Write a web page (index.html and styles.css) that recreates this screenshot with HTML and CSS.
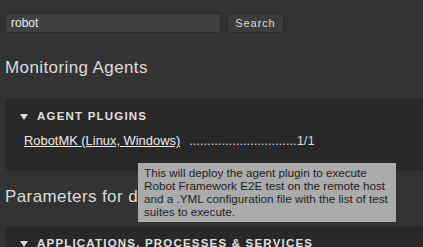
FILE: index.html
```html
<!DOCTYPE html>
<html lang="en">
<head>
  <meta charset="UTF-8" />
  <title>Monitoring Agents</title>
  <link rel="stylesheet" href="styles.css">
</head>
<body>
  <div class="page">
    <form class="search">
      <input class="search-input" type="text" value="robot" />
      <button class="search-button" type="button">Search</button>
    </form>

    <h1 class="title">Monitoring Agents</h1>

    <div class="box">
      <div class="box-head">
        <span class="caret"></span>
        <span class="box-title">AGENT PLUGINS</span>
      </div>
      <div class="row">
        <a class="row-link" href="#">RobotMK (Linux, Windows)</a>
        <span class="row-dots">..............................1/1</span>
      </div>
    </div>

    <h1 class="title title-params">Parameters for deployed agents</h1>

    <div class="box box-next">
      <div class="box-head">
        <span class="caret"></span>
        <span class="box-title">APPLICATIONS, PROCESSES &amp; SERVICES</span>
      </div>
    </div>

    <!-- tooltip over the link -->
    <div class="tooltip">This will deploy the agent plugin to execute<br>Robot Framework E2E test on the remote host<br>and a .YML configuration file with the list of test<br>suites to execute.</div>
  </div>
</body>
</html>
```

FILE: styles.css
```css
html {
  overflow: hidden;
}

body {
  margin: 0;
  background-color: #333333;
  color: #dcdcdc;
  font-family: 'Liberation Sans', Arial, sans-serif;
}

.page {
  position: relative;
  width: 440px;
  height: 247px;
  overflow: hidden;
  padding: 13px 0 0 5px;
}

.search {
  display: flex;
  gap: 6px;
  margin: 0;
}

.search-input {
  box-sizing: border-box;
  width: 216px;
  height: 20px;
  padding: 0 5px;
  background: #404040;
  border: 1px solid #2a2a2a;
  border-radius: 3px;
  color: #ededed;
  font-family: inherit;
  font-size: 12px;
  outline: none;
}

.search-button {
  box-sizing: border-box;
  width: 57px;
  height: 20px;
  padding: 0;
  background: #3c3c3c;
  border: 1px solid #2a2a2a;
  border-radius: 4px;
  color: #dcdcdc;
  font-family: inherit;
  font-size: 11px;
  letter-spacing: 0.9px;
}

.title {
  margin: 25px 0 0;
  font-size: 17px;
  font-weight: normal;
  letter-spacing: 0.4px;
  line-height: 20px;
}

.title-params {
  margin-top: 16px;
  white-space: nowrap;
}

.box {
  margin-top: 21px;
  background: #282828;
  border-top: 1px solid #2c2c2c;
  border-left: 1px solid #2c2c2c;
  border-radius: 5px 0 0 5px;
  padding: 8px 0 23px 14px;
}

.box-next {
  margin-top: 19px;
}

.box-head {
  display: flex;
  align-items: center;
  gap: 9px;
  height: 15px;
}

.caret {
  width: 0;
  height: 0;
  margin-top: 3px;
  border-left: 4px solid transparent;
  border-right: 4px solid transparent;
  border-top: 6px solid #d8d8d8;
}

.box-title {
  font-size: 11.5px;
  font-weight: bold;
  letter-spacing: 1.2px;
  color: #e0e0e0;
  white-space: nowrap;
}

.row {
  display: flex;
  gap: 9px;
  margin: 11px 0 0 4px;
  font-size: 12.9px;
  line-height: 14px;
}

.row-link {
  color: #ececec;
  text-decoration: underline;
}

.row-dots {
  color: #dcdcdc;
}

.tooltip {
  position: absolute;
  left: 138px;
  top: 163px;
  box-sizing: border-box;
  width: 258px;
  padding: 3px 5px 4px 6px;
  background: #ababab;
  color: #1e1e1e;
  font-size: 11.7px;
  line-height: 13px;
  white-space: nowrap;
}
```
